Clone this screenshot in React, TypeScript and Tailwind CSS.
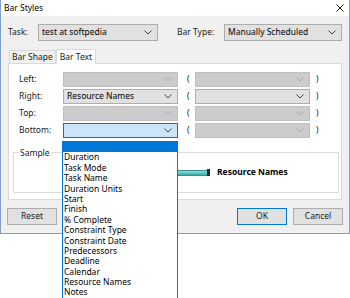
import React from 'react'

const font = "font-['Segoe_UI','Noto_Sans',sans-serif]"

function Chevron({ light }: { light?: boolean }) {
  return (
    <svg width="8" height="5" viewBox="0 0 8 5" className="shrink-0">
      <polyline
        points="0.5,0.5 4,4 7.5,0.5"
        fill="none"
        stroke={light ? '#a8a8a8' : '#404040'}
        strokeWidth="1"
      />
    </svg>
  )
}

type SelectKind = 'normal' | 'disabled' | 'focus'

function Select({ value, kind, className }: { value?: string; kind: SelectKind; className: string }) {
  const look =
    kind === 'disabled'
      ? 'bg-[#cccccc] border-[#bfbfbf]'
      : kind === 'focus'
        ? 'bg-[#cce4f7] border-[#0078d7]'
        : 'bg-[#e1e1e1] border-[#adadad]'
  return (
    <div className={`flex items-center justify-between border pl-[3px] pr-[5px] text-black ${look} ${className}`}>
      <span className="truncate">{value}</span>
      <Chevron light={kind === 'disabled'} />
    </div>
  )
}

const rows: { label: string; value?: string; kind: SelectKind }[] = [
  { label: 'Left:', kind: 'disabled' },
  { label: 'Right:', value: 'Resource Names', kind: 'normal' },
  { label: 'Top:', kind: 'disabled' },
  { label: 'Bottom:', kind: 'focus' },
]

const options = [
  'Duration',
  'Task Mode',
  'Task Name',
  'Duration Units',
  'Start',
  'Finish',
  '% Complete',
  'Constraint Type',
  'Constraint Date',
  'Predecessors',
  'Deadline',
  'Calendar',
  'Resource Names',
  'Notes',
]

export default function App() {
  return (
    <div className={`relative w-[350px] h-[298px] bg-white overflow-hidden text-[8.5px] text-[#1a1a1a] ${font}`}>
      {/* Dialog window */}
      <div className="flex flex-col w-[350px] h-[234px] border border-t-0 border-[#7e9fc9] bg-[#f0f0f0]">
        {/* Title bar */}
        <div className="flex items-center justify-between h-[16px] bg-white pl-[3px] pr-[5px]">
          <span className="text-[8.5px] text-black">Bar Styles</span>
          <svg width="8" height="8" viewBox="0 0 8 8">
            <path d="M0.5 0.5 L7.5 7.5 M7.5 0.5 L0.5 7.5" stroke="#202020" strokeWidth="1" />
          </svg>
        </div>

        {/* Task / Bar Type */}
        <div className="flex items-center h-[17px] mt-[8px] pl-[7px]">
          <span className="w-[30px]">Task:</span>
          <Select value="test at softpedia" kind="normal" className="w-[120px] h-[17px]" />
          <span className="ml-[19px] w-[47px]">Bar Type:</span>
          <Select value="Manually Scheduled" kind="normal" className="w-[118px] h-[17px]" />
        </div>

        {/* Tabs */}
        <div className="flex items-end h-[15px] mt-[7px] pl-[8px]">
          <div className="h-[13px] px-[2px] flex items-center border border-b-0 border-[#d9d9d9] bg-[#f0f0f0]">
            Bar Shape
          </div>
          <div className="h-[15px] px-[3px] flex items-center border border-b-0 border-[#d9d9d9] bg-white relative top-[1px]">
            Bar Text
          </div>
        </div>

        {/* Tab panel */}
        <div className="ml-[7px] w-[334px] h-[137px] border border-[#d9d9d9] bg-white flex flex-col">
          <div className="flex flex-col gap-[2px] mt-[8px]">
            {rows.map(r => (
              <div key={r.label} className="flex items-center h-[15px]">
                <span className="w-[54px] pl-[10px]">{r.label}</span>
                <Select value={r.value} kind={r.kind} className="w-[115px] h-[15px]" />
                <span className="ml-[9px] w-[8px]">(</span>
                <Select kind={r.kind === 'normal' ? 'normal' : 'disabled'} className="w-[115px] h-[15px]" />
                <span className="ml-[6px]">)</span>
              </div>
            ))}
          </div>

          {/* Sample group */}
          <div className="relative mt-[14px] ml-[4px] w-[326px] h-[41px] border border-[#dcdcdc]">
            <span className="absolute -top-[6px] left-[5px] bg-white px-[1px]">Sample</span>
            <div className="flex items-center h-full pl-[141px]">
              <div className="w-[52px] h-[6px] border-y border-[#3a8f8f] bg-gradient-to-b from-[#8fdede] via-[#5cc8c8] to-[#3aa6a6]" />
              <div className="w-[3px] h-[7px] bg-[#2a2a2a]" />
              <span className="ml-[7px] font-bold text-black">Resource Names</span>
            </div>
          </div>
        </div>

        {/* Buttons */}
        <div className="flex items-center mt-[8px] px-[6px]">
          <button className="w-[50px] h-[17px] border border-[#adadad] bg-[#e1e1e1]">Reset</button>
          <div className="flex-1" />
          <button className="w-[50px] h-[17px] border border-[#0078d7] bg-[#e1e1e1]">OK</button>
          <button className="ml-[6px] w-[50px] h-[17px] border border-[#adadad] bg-[#e1e1e1]">Cancel</button>
        </div>
      </div>

      {/* Dropdown list overlay */}
      <div className="absolute left-[62px] top-[141px] w-[116px] h-[160px] border border-[#0078d7] bg-white text-black">
        <div className="h-[10.4px] bg-[#0078d7]" />
        {options.map(o => (
          <div key={o} className="h-[10.4px] leading-[10.4px] pl-[1px]">
            {o}
          </div>
        ))}
      </div>
    </div>
  )
}
